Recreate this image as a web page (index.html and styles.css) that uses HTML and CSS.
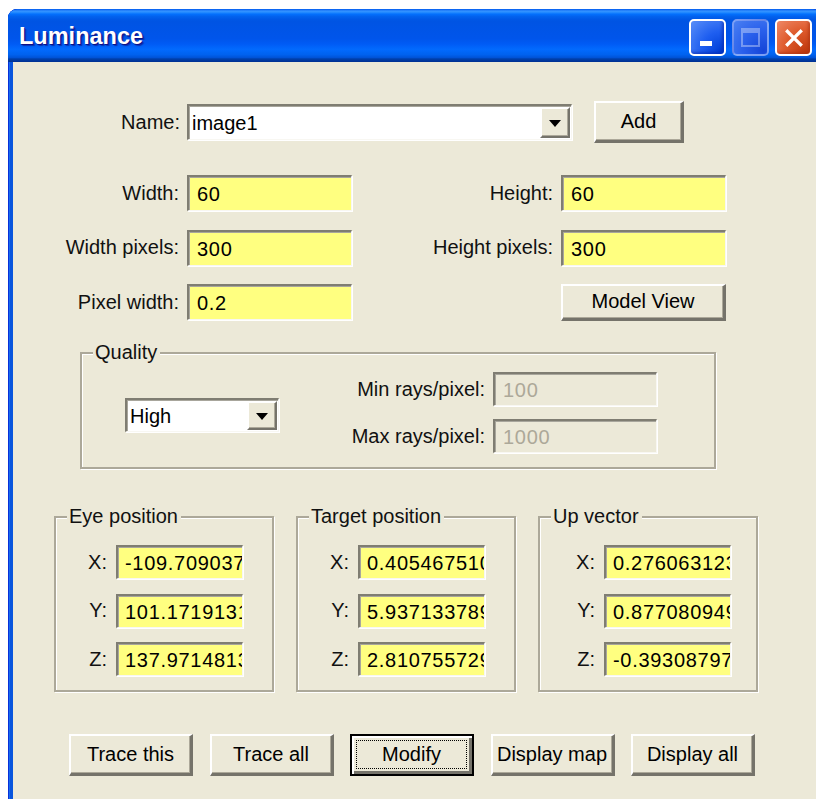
FILE: index.html
```html
<!DOCTYPE html>
<html lang="en">
<head>
<meta charset="utf-8">
<title>Luminance</title>
<link rel="stylesheet" href="styles.css">
</head>
<body>
<div class="window">
  <div class="titlebar">
    <span class="title">Luminance</span>
    <div class="caption-buttons">
      <div class="cap-btn cap-min"><span class="min-bar"></span></div>
      <div class="cap-btn cap-max disabled"><span class="max-box"></span></div>
      <div class="cap-btn cap-close">
        <svg viewBox="0 0 20 20" width="22" height="22"><path d="M4 4 L16 16 M16 4 L4 16" stroke="#fff" stroke-width="3" stroke-linecap="square"/></svg>
      </div>
    </div>
  </div>

  <div class="client">
    <div class="name-row">
      <label class="lbl name-lbl">Name:</label>
      <div class="combo name-combo">
        <span class="combo-text">image1</span>
        <span class="drop-btn"><span class="arrow"></span></span>
      </div>
      <button class="btn add-btn">Add</button>
    </div>

    <div class="dims">
      <label class="lbl">Width:</label>
      <input class="edit" value="60">
      <label class="lbl">Height:</label>
      <input class="edit" value="60">

      <label class="lbl">Width pixels:</label>
      <input class="edit" value="300">
      <label class="lbl">Height pixels:</label>
      <input class="edit" value="300">

      <label class="lbl">Pixel width:</label>
      <input class="edit" value="0.2">
      <span></span>
      <button class="btn model-btn">Model View</button>
    </div>

    <div class="group quality">
      <span class="group-title">Quality</span>
      <div class="combo quality-combo">
        <span class="combo-text">High</span>
        <span class="drop-btn"><span class="arrow"></span></span>
      </div>
      <div class="rays">
        <label class="lbl">Min rays/pixel:</label>
        <input class="edit off" value="100" disabled>
        <label class="lbl">Max rays/pixel:</label>
        <input class="edit off" value="1000" disabled>
      </div>
    </div>

    <div class="vectors">
      <div class="group vec">
        <span class="group-title">Eye position</span>
        <label class="lbl">X:</label><input class="edit" value="-109.709037">
        <label class="lbl">Y:</label><input class="edit" value="101.1719131">
        <label class="lbl">Z:</label><input class="edit" value="137.9714813">
      </div>
      <div class="group vec">
        <span class="group-title">Target position</span>
        <label class="lbl">X:</label><input class="edit" value="0.405467510">
        <label class="lbl">Y:</label><input class="edit" value="5.937133789">
        <label class="lbl">Z:</label><input class="edit" value="2.810755729">
      </div>
      <div class="group vec up">
        <span class="group-title">Up vector</span>
        <label class="lbl">X:</label><input class="edit" value="0.276063123">
        <label class="lbl">Y:</label><input class="edit" value="0.877080949">
        <label class="lbl">Z:</label><input class="edit" value="-0.39308797">
      </div>
    </div>

    <div class="actions">
      <button class="btn act">Trace this</button>
      <button class="btn act">Trace all</button>
      <button class="btn act default"><span class="focus">Modify</span></button>
      <button class="btn act">Display map</button>
      <button class="btn act">Display all</button>
    </div>
  </div>
</div>
</body>
</html>
```

FILE: styles.css
```css
html, body {
  margin: 0;
  padding: 0;
  background: #ffffff;
  overflow: hidden;
}

body {
  width: 816px;
  height: 799px;
  font-family: "Liberation Sans", Arial, sans-serif;
  font-size: 20px;
  color: #000;
}

/* ---- window frame ---- */
.window {
  margin: 9px 0 0 8px;
  width: 814px;
  height: 820px;
  background: #0855dd;
  border-radius: 9px 9px 0 0;
  box-shadow: inset 1px 1px #0831d9, inset 2px 2px #166aee, inset 3px 3px #0855dd;
  overflow: hidden;
}

.titlebar {
  height: 53px;
  display: flex;
  align-items: center;
  justify-content: space-between;
  padding: 0 10px 0 11px;
  border-radius: 9px 9px 0 0;
  background: linear-gradient(to bottom,
    #0058ee 0%, #3593ff 4%, #288eff 6%, #127dff 8%, #036ffc 10%,
    #0262ee 14%, #0057e5 20%, #0054e3 24%, #0055eb 56%, #005bf5 66%,
    #026afe 76%, #0062ef 86%, #0052d6 92%, #0040ab 94%, #003092 100%);
}

.title {
  font-family: "Liberation Sans", Arial, sans-serif;
  font-weight: bold;
  font-size: 23.5px;
  color: #fff;
  text-shadow: 1px 1px 0 #0f1089, 2px 2px 1px rgba(10, 24, 131, 0.6);
  margin-top: 1px;
}

.caption-buttons {
  display: flex;
  gap: 6px;
  margin-top: 4px;
}

.cap-btn {
  width: 37px;
  height: 37px;
  box-sizing: border-box;
  border-radius: 5px;
  border: 2px solid #fff;
  display: flex;
  align-items: center;
  justify-content: center;
  position: relative;
}

.cap-min {
  background: radial-gradient(circle at 90% 90%, #0040d8 0%, #1e5ef0 45%, #5a8ff8 100%);
  box-shadow: inset -2px -2px 3px rgba(0, 30, 160, 0.5);
}

.min-bar {
  position: absolute;
  left: 9px;
  bottom: 8px;
  width: 12px;
  height: 5px;
  background: #fff;
}

.cap-max.disabled {
  border-color: rgba(255, 255, 255, 0.35);
  background: radial-gradient(circle at 90% 90%, #1545d8 0%, #2a60ec 50%, #4a80f2 100%);
}

.max-box {
  width: 19px;
  height: 19px;
  box-sizing: border-box;
  border: 2px solid rgba(255, 255, 255, 0.35);
  border-top-width: 5px;
}

.cap-close {
  background: radial-gradient(circle at 85% 90%, #c23b10 0%, #de5a2c 50%, #ef8a68 100%);
  box-shadow: inset -2px -2px 3px rgba(160, 40, 10, 0.5);
}

/* ---- client area ---- */
.client {
  margin: 0 5px 0 5px;
  height: 767px;
  background: #ece9d8;
  overflow: hidden;
}

.lbl {
  text-align: right;
  white-space: nowrap;
  align-self: center;
  color: #111;
}

/* sunken edit field */
.edit {
  box-sizing: border-box;
  width: 165px;
  height: 36px;
  margin: 0;
  padding: 2px 0 0 8px;
  font: inherit;
  letter-spacing: 0.7px;
  color: #000;
  background: #ffff80;
  border-style: solid;
  border-width: 2px 1px 1px 2px;
  border-color: #7f7d72 #f8f7f2 #f8f7f2 #7f7d72;
  box-shadow: inset 1px 1px 0 #a8a69c, 1px 1px 0 #ffffff;
  outline: none;
}

.edit.off {
  background: #ece9d8;
  color: #aca899;
  -webkit-text-fill-color: #aca899;
  opacity: 1;
}

/* raised push button */
.btn {
  box-sizing: border-box;
  margin: 0;
  padding: 0;
  font: inherit;
  color: #000;
  background: #ece9d8;
  border-style: solid;
  border-width: 2px 3px 3px 2px;
  border-color: #ffffff #75736a #75736a #ffffff;
  box-shadow: inset -1px -1px 0 #aca899;
}

.btn.default {
  border: 2px solid #000;
  box-shadow: inset 2px 2px 0 #fff, inset -3px -3px 0 #75736a;
}

.focus {
  display: flex;
  align-items: center;
  justify-content: center;
  margin: 4px 5px 5px 4px;
  height: calc(100% - 9px);
  border: 1.5px dotted #000;
  box-sizing: border-box;
}

/* combo box */
.combo {
  box-sizing: border-box;
  display: flex;
  align-items: stretch;
  background: #fff;
  border-style: solid;
  border-width: 2px 1px 1px 2px;
  border-color: #7f7d72 #f8f7f2 #f8f7f2 #7f7d72;
  box-shadow: inset 1px 1px 0 #a8a69c, 1px 1px 0 #ffffff;
  padding: 1px;
}

.combo-text {
  flex: 1;
  display: flex;
  align-items: center;
  padding-left: 2px;
  padding-top: 2px;
}

.drop-btn {
  width: 30px;
  box-sizing: border-box;
  background: #ece9d8;
  border-style: solid;
  border-width: 2px 2px 2px 2px;
  border-color: #ffffff #75736a #75736a #ffffff;
  box-shadow: inset -1px -1px 0 #aca899;
  display: flex;
  align-items: center;
  justify-content: center;
}

.arrow {
  width: 0;
  height: 0;
  border-left: 6px solid transparent;
  border-right: 6px solid transparent;
  border-top: 7px solid #000;
  margin-top: 2px;
}

/* ---- name row ---- */
.name-row {
  display: flex;
  align-items: center;
  height: 42px;
  margin-top: 39px;
}

.name-lbl {
  width: 167px;
  margin-right: 7px;
}

.name-combo {
  width: 385px;
  height: 36px;
}

.add-btn {
  width: 90px;
  height: 42px;
  margin-left: 22px;
}

/* ---- dimension grid ---- */
.dims {
  display: grid;
  grid-template-columns: 174px 165px 209px 165px;
  grid-template-rows: 36px 36px 36px;
  row-gap: 18.5px;
  margin-top: 32px;
}

.dims .lbl {
  padding-right: 8px;
}

.model-btn {
  width: 165px;
  height: 37px;
  align-self: center;
}

/* ---- group boxes ---- */
.group {
  position: relative;
  box-sizing: border-box;
  border: 2px solid #aca899;
  box-shadow: inset 1px 1px 0 #fff, 1px 1px 0 #fff;
}

.group-title {
  position: absolute;
  top: -13px;
  left: 11px;
  padding: 0 3px 0 2px;
  background: #ece9d8;
  line-height: 22px;
  color: #111;
}

.quality {
  margin: 32px 0 0 67px;
  width: 636px;
  height: 117px;
  display: flex;
  align-items: center;
  padding: 17px 57px 13px 43px;
}

.quality-combo {
  width: 154px;
  height: 34px;
  margin-top: 5px;
}

.rays {
  margin-left: auto;
  display: grid;
  grid-template-columns: auto 164px;
  grid-template-rows: 34px 34px;
  row-gap: 13px;
}

.rays .lbl {
  padding-right: 8px;
}

.rays .edit {
  width: 164px;
  height: 34px;
}

.vectors {
  display: flex;
  gap: 22px;
  margin: 47px 0 0 41px;
}

.vec {
  width: 220px;
  height: 176px;
  display: grid;
  grid-template-columns: 60px 127px;
  grid-template-rows: 34px 34px 34px;
  row-gap: 14.5px;
  padding-top: 27px;
  align-content: start;
}

.vec .lbl {
  padding-right: 9px;
}

.vec.up {
  grid-template-columns: 64px 127px;
}

.vec .edit {
  width: 127px;
  height: 34px;
  padding-left: 7px;
  padding-right: 0;
}

/* ---- bottom buttons ---- */
.actions {
  display: flex;
  gap: 16.5px;
  margin: 42px 0 0 56px;
}

.act {
  width: 124px;
  height: 42px;
}
```
